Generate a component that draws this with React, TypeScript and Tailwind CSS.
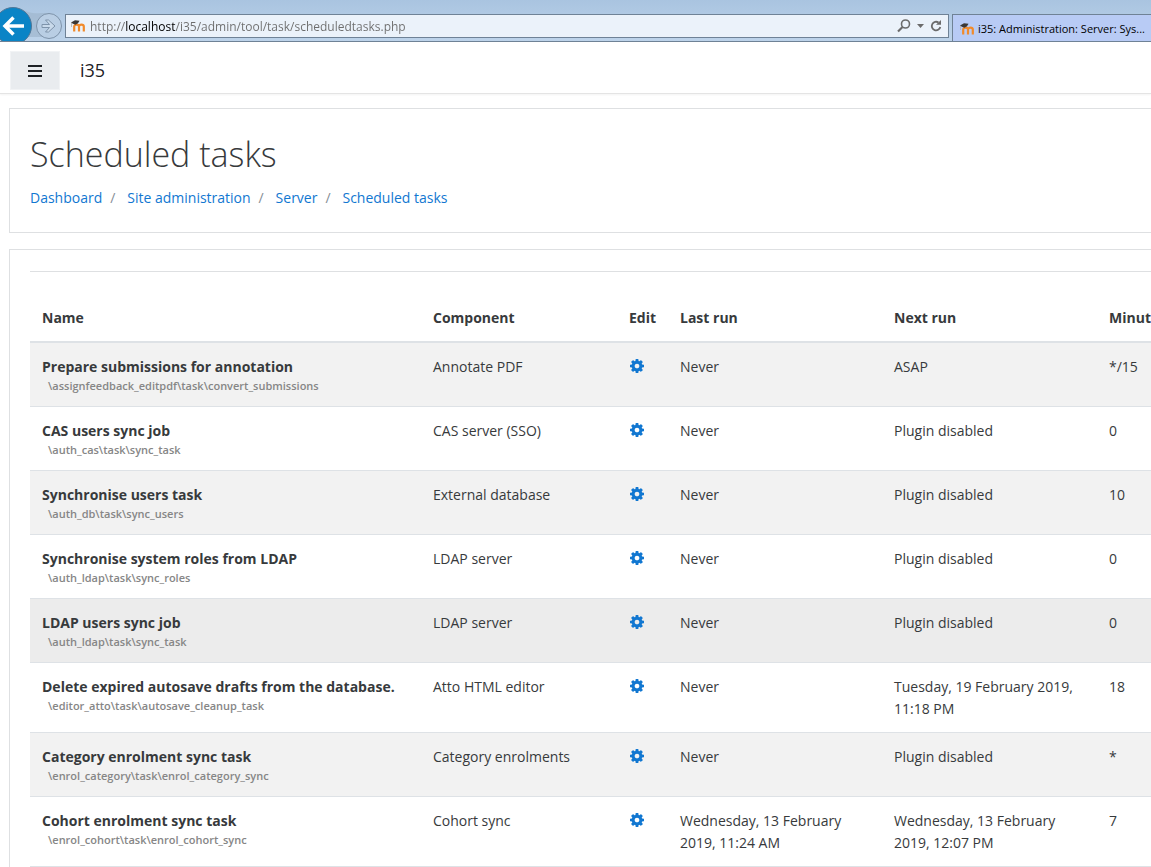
import React from 'react';

const tasks = [
  { name: 'Prepare submissions for annotation', path: '\\assignfeedback_editpdf\\task\\convert_submissions', component: 'Annotate PDF', lastRun: 'Never', nextRun: 'ASAP', minute: '*/15' },
  { name: 'CAS users sync job', path: '\\auth_cas\\task\\sync_task', component: 'CAS server (SSO)', lastRun: 'Never', nextRun: 'Plugin disabled', minute: '0' },
  { name: 'Synchronise users task', path: '\\auth_db\\task\\sync_users', component: 'External database', lastRun: 'Never', nextRun: 'Plugin disabled', minute: '10' },
  { name: 'Synchronise system roles from LDAP', path: '\\auth_ldap\\task\\sync_roles', component: 'LDAP server', lastRun: 'Never', nextRun: 'Plugin disabled', minute: '0' },
  { name: 'LDAP users sync job', path: '\\auth_ldap\\task\\sync_task', component: 'LDAP server', lastRun: 'Never', nextRun: 'Plugin disabled', minute: '0', active: true },
  { name: 'Delete expired autosave drafts from the database.', path: '\\editor_atto\\task\\autosave_cleanup_task', component: 'Atto HTML editor', lastRun: 'Never', nextRun: 'Tuesday, 19 February 2019, 11:18 PM', minute: '18' },
  { name: 'Category enrolment sync task', path: '\\enrol_category\\task\\enrol_category_sync', component: 'Category enrolments', lastRun: 'Never', nextRun: 'Plugin disabled', minute: '*' },
  { name: 'Cohort enrolment sync task', path: '\\enrol_cohort\\task\\enrol_cohort_sync', component: 'Cohort sync', lastRun: 'Wednesday, 13 February 2019, 11:24 AM', nextRun: 'Wednesday, 13 February 2019, 12:07 PM', minute: '7' },
];

const crumbs = ['Dashboard', 'Site administration', 'Server', 'Scheduled tasks'];

function MoodleIcon() {
  return (
    <svg className="h-4 w-4 shrink-0" viewBox="0 0 16 16" fill="none" aria-hidden="true">
      <path d="M4.200 13.500V8.500c0-2.500 4.800-2.500 4.800 0v5M9 8.500c0-2.500 4.800-2.500 4.800 0v5" stroke="#f18a2b" strokeWidth="2.200" />
      <path d="M1 4.500 5 2.300l4.500.400-1.500 2.600-2.500 1.500L3 5.800z" fill="#3b3735" />
      <path d="M1.500 5v4" stroke="#b5afa9" strokeWidth="0.800" />
    </svg>
  );
}

function CogIcon() {
  return (
    <svg className="h-[14px] w-[14px]" viewBox="0 128 1536 1536" fill="currentColor" aria-hidden="true">
      <path d="M1024 896q0-106-75-181t-181-75-181 75-75 181 75 181 181 75 181-75 75-181zm512-109v222q0 12-8 23t-20 13l-185 28q-19 54-39 91 35 50 107 138 10 12 10 25t-9 23q-27 37-99 108t-94 71q-12 0-26-9l-138-108q-44 23-91 38-16 136-29 186-7 28-36 28H657q-14 0-24.5-8.5T621 1634l-28-184q-49-16-90-37l-141 107q-10 9-25 9-14 0-25-11-126-114-165-168-7-10-7-23 0-12 8-23 15-21 51-66.5t54-70.5q-27-50-41-99L29 1040q-13-2-21-12.5T0 1004V782q0-12 8-23t19-13l186-28q14-46 39-92-40-57-107-138-10-12-10-24 0-10 9-23 26-36 98.5-107.5T337 262q13 0 26 10l138 107q44-23 91-38 16-136 29-186 7-28 36-28h222q14 0 24.5 8.5T915 157l28 184q49 16 90 37l142-107q9-9 24-9 13 0 25 10 129 119 165 170 7 8 7 22 0 12-8 23-15 21-51 66.5t-54 70.5q26 50 41 98l183 28q13 2 21 12.5t8 23.5z" />
    </svg>
  );
}

// Browser window strip: history buttons, address bar and the open tab
function BrowserBar() {
  return (
    <div className="flex h-[42px] border-b border-[#6f8296] bg-linear-to-b from-[#a9c4e0] to-[#bdd3ea]">
      <div className="relative w-[65px] shrink-0 overflow-hidden">
        <svg className="absolute inset-0 h-[41px] w-[65px]" viewBox="0 0 65 41" fill="none" aria-hidden="true">
          <path d="M22 9c6 4 12 5 19 4h8v24H28z" fill="#9fb6cd" opacity="0.7" />
          <circle cx="13" cy="26" r="18.500" fill="#0a84c6" stroke="#4f7798" />
          <path d="M5 26h19M13.500 17.500 5 26l8.500 8.500" stroke="#fff" strokeWidth="3.500" />
          <circle cx="49" cy="26" r="12.500" fill="#b9cee4" stroke="#7e93aa" />
          <path d="M42 24.500h7.500l-4-4.500h3l6.500 6-6.500 6h-3l4-4.500H42z" fill="#c9daeb" stroke="#7e93aa" />
        </svg>
        <button type="button" aria-label="Back" className="absolute top-[7px] left-0 h-[34px] w-8 rounded-r-full" />
        <button type="button" aria-label="Forward" className="absolute top-[14px] left-9 h-6 w-6 rounded-full" />
      </div>
      <div className="mt-[14px] mr-[3px] flex h-6 min-w-0 flex-1 items-center border border-[#6f8296] bg-[#ebf2fa] px-1">
        <MoodleIcon />
        <input
          type="text"
          aria-label="Address"
          defaultValue="http://localhost/i35/admin/tool/task/scheduledtasks.php"
          className="ml-1 h-5 min-w-0 flex-1 bg-[linear-gradient(90deg,#6d6d6d_35px,#000_35px,#000_85px,#6d6d6d_85px)] bg-clip-text text-[12px] text-transparent outline-none"
        />
        <button type="button" aria-label="Search" className="h-5 w-4">
          <svg className="h-4 w-4" viewBox="0 0 16 16" fill="none" stroke="#6b6b6b" aria-hidden="true">
            <circle cx="9.500" cy="6" r="4" strokeWidth="1.600" />
            <path d="M6.500 9 2 13.500" strokeWidth="2.200" />
          </svg>
        </button>
        <button type="button" aria-label="Show address history" className="flex h-5 w-4 items-center justify-center">
          <svg className="h-1 w-[7px]" viewBox="0 0 7 4" fill="#6b6b6b" aria-hidden="true">
            <path d="M0 0h7L3.500 4z" />
          </svg>
        </button>
        <button type="button" aria-label="Refresh" className="h-5 w-4">
          <svg className="h-4 w-4" viewBox="0 0 16 16" fill="none" aria-hidden="true">
            <path d="M10.500 4.500A4.300 4.300 0 1 0 12.300 9" stroke="#6b6b6b" strokeWidth="1.800" />
            <path d="M8 6.700h5V2z" fill="#6b6b6b" />
          </svg>
        </button>
      </div>
      <div className="mt-[14px] flex w-[199px] shrink-0 items-center gap-[3px] border-t border-l border-[#6f8296] bg-[#b8cbf5] pt-[2px] pl-[6px] text-[11px] whitespace-nowrap text-black">
        <MoodleIcon />
        i35: Administration: Server: Sys...
      </div>
    </div>
  );
}

function TaskTable() {
  return (
    <table className="w-[1260px] table-fixed border-separate border-spacing-0 text-left text-[14px] leading-[22px]">
      <colgroup>
        <col className="w-[391px]" />
        <col className="w-[196px]" />
        <col className="w-[51px]" />
        <col className="w-[214px]" />
        <col className="w-[215px]" />
        <col />
      </colgroup>
      <thead>
        <tr className="[&>th]:border-b-2 [&>th]:border-[#dee2e6] [&>th]:px-3 [&>th]:pt-[13px] [&>th]:pb-3 [&>th]:font-bold">
          <th scope="col">Name</th>
          <th scope="col">Component</th>
          <th scope="col">Edit</th>
          <th scope="col">Last run</th>
          <th scope="col">Next run</th>
          <th scope="col">Minute</th>
        </tr>
      </thead>
      <tbody className="[&>tr>*]:border-b [&>tr>*]:border-[#dee2e6] [&>tr>*]:px-3 [&>tr>*]:pt-[13px] [&>tr>*]:pb-3 [&>tr>*]:align-top">
        {tasks.map((task) => (
          <tr key={task.path} className={task.active ? 'bg-[#ececec]' : 'odd:bg-[#f2f2f2]'}>
            <th scope="row" className="font-bold">
              <div>{task.name}</div>
              <div className="pb-px pl-[6px] text-[11px] leading-[15px] font-semibold text-[#868686]">{task.path}</div>
            </th>
            <td>{task.component}</td>
            <td>
              <a href="#" aria-label={`Edit ${task.name}`} className="flex h-5 w-4 items-center justify-center text-[#1177d1]">
                <CogIcon />
              </a>
            </td>
            <td>{task.lastRun}</td>
            <td>{task.nextRun}</td>
            <td>{task.minute}</td>
          </tr>
        ))}
      </tbody>
    </table>
  );
}

export default function App() {
  return (
    <div className="h-screen overflow-hidden bg-white font-['Open_Sans','Noto_Sans',sans-serif] text-[#373a3c]">
      <BrowserBar />
      <header className="flex h-[52px] items-center gap-5 border-b border-[#e4e4e4] pt-[6px] pl-[10px] shadow-xs">
        <button type="button" aria-label="Side panel" className="flex h-[39px] w-[50px] items-center justify-center border border-[#f1f3f5] bg-[#e9ecef]">
          <svg className="h-3 w-[14px]" viewBox="0 0 14 12" fill="#1d2125" aria-hidden="true">
            <path d="M0 0h14v2H0zM0 5h14v2H0zM0 10h14v2H0z" />
          </svg>
        </button>
        <a href="#" className="text-[18px] text-[#1d2125]">i35</a>
      </header>
      <main className="mt-[14px] flex flex-col gap-4 pl-[9px]">
        <section className="h-[125px] border-y border-l border-[#dee0e2] pt-5 pl-5">
          <h1 className="text-[34px] leading-[50px] font-light">Scheduled tasks</h1>
          <nav aria-label="Breadcrumb" className="mt-2">
            <ol className="flex text-[14px] leading-[22px]">
              {crumbs.map((crumb, i) => (
                <li key={crumb} className="flex">
                  {i > 0 && <span className="w-[25px] pl-2 text-[#868e96]">/</span>}
                  <a href="#" className="text-[#1177d1]">{crumb}</a>
                </li>
              ))}
            </ol>
          </nav>
        </section>
        <section className="border-t border-l border-[#dee0e2] pt-[21px] pl-5">
          <div className="border-t border-[#dee0e2] pt-[22px]">
            <TaskTable />
          </div>
        </section>
      </main>
    </div>
  );
}
